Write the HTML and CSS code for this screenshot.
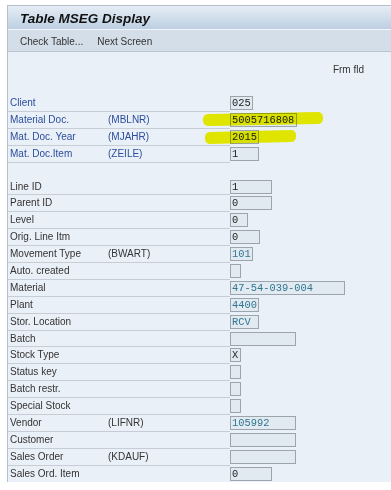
FILE: index.html
```html
<!DOCTYPE html>
<html lang="en-US">
<head>
    <meta charset="UTF-8">
    <meta name="viewport" content="width=device-width" />
    <title>Table MSEG Display</title>
<link rel="stylesheet" href="styles.css">
</head>

<body>
<div id=win>
  <div id=title>Table MSEG Display</div>
  <div id=tools>
    <span>Check Table...</span>
    <span>Next Screen</span>
  </div>
  <div id=main>
    <div id=frm>Frm fld</div>

    <div class="sec key">
      <div class=row><div class=lbl><span class=nm>Client</span></div><span class="fld w23">025</span></div>
      <div class=row><div class=lbl><span class=nm>Material Doc.</span><span class=tc>(MBLNR)</span></div><span class="fld w67">5005716808</span><i class="mark m1"></i></div>
      <div class=row><div class=lbl><span class=nm>Mat. Doc. Year</span><span class=tc>(MJAHR)</span></div><span class="fld w29">2015</span><i class="mark m2"></i></div>
      <div class=row><div class=lbl><span class=nm>Mat. Doc.Item</span><span class=tc>(ZEILE)</span></div><span class="fld w29">1</span></div>
    </div>

    <div class=sec>
      <div class=row><div class=lbl><span class=nm>Line ID</span></div><span class="fld w42">1</span></div>
      <div class=row><div class=lbl><span class=nm>Parent ID</span></div><span class="fld w42">0</span></div>
      <div class=row><div class=lbl><span class=nm>Level</span></div><span class="fld w18">0</span></div>
      <div class=row><div class=lbl><span class=nm>Orig. Line Itm</span></div><span class="fld w30">0</span></div>
      <div class=row><div class=lbl><span class=nm>Movement Type</span><span class=tc>(BWART)</span></div><span class="fld w23 val">101</span></div>
      <div class=row><div class=lbl><span class=nm>Auto. created</span></div><span class="fld w11"></span></div>
      <div class=row><div class=lbl><span class=nm>Material</span></div><span class="fld w115 val">47-54-039-004</span></div>
      <div class=row><div class=lbl><span class=nm>Plant</span></div><span class="fld w29 val">4400</span></div>
      <div class=row><div class=lbl><span class=nm>Stor. Location</span></div><span class="fld w29 val">RCV</span></div>
      <div class=row><div class=lbl><span class=nm>Batch</span></div><span class="fld w66"></span></div>
      <div class=row><div class=lbl><span class=nm>Stock Type</span></div><span class="fld w11">X</span></div>
      <div class=row><div class=lbl><span class=nm>Status key</span></div><span class="fld w11"></span></div>
      <div class=row><div class=lbl><span class=nm>Batch restr.</span></div><span class="fld w11"></span></div>
      <div class=row><div class=lbl><span class=nm>Special Stock</span></div><span class="fld w11"></span></div>
      <div class=row><div class=lbl><span class=nm>Vendor</span><span class=tc>(LIFNR)</span></div><span class="fld w66 val">105992</span></div>
      <div class=row><div class=lbl><span class=nm>Customer</span></div><span class="fld w66"></span></div>
      <div class=row><div class=lbl><span class=nm>Sales Order</span><span class=tc>(KDAUF)</span></div><span class="fld w66"></span></div>
      <div class=row><div class=lbl><span class=nm>Sales Ord. Item</span></div><span class="fld w42">0</span></div>
    </div>
  </div>
</div>
</body>
</html>
```

FILE: styles.css
```css
body {
  margin: 0;
  background: white;
  font: 10px "Liberation Sans", Arial, sans-serif;
  color: #333;
}
#win {
  margin: 5px 0 0 7px;
  border-left: 1px solid #b4c0cc;
  border-top: 1px solid #b4c0cc;
}
#title {
  height: 23px;
  padding-left: 12px;
  font: italic bold 13.5px/25px "Liberation Sans", Arial, sans-serif;
  color: #111;
  background: linear-gradient(#e6edf5, #bccfe2);
  border-bottom: 1px solid #f2f6fa;
}
#tools {
  height: 21px;
  line-height: 23px;
  padding-left: 12px;
  display: flex;
  gap: 14px;
  background: #d3dee9;
  border-bottom: 1px solid #b9c5d1;
}
#main {
  background: #eaf0f7;
  height: 430px;
}
#frm {
  height: 43px;
  line-height: 36px;
  text-align: right;
  padding-right: 27px;
}
.sec { margin-bottom: 16px; }
.row {
  position: relative;
  display: flex;
  height: 16.9px;
  align-items: flex-start;
}
.lbl {
  width: 220px;
  height: 15.9px;
  line-height: 16px;
  padding-left: 2px;
  display: flex;
  border-bottom: 1px solid #c6cdd5;
}
.nm { width: 98px; }
.key .lbl { color: #2b4d9c; }
.fld {
  box-sizing: border-box;
  height: 14px;
  margin-top: 1px;
  border: 1px solid #9ca5ae;
  background: #e2eaf1;
  font: 10.4px/12px "Liberation Mono", "Courier New", monospace;
  padding-left: 1px;
  color: #222;
  white-space: nowrap;
  overflow: hidden;
}
.val { color: #2f7690; }
.w11 { width: 11px; }
.w18 { width: 18px; }
.w23 { width: 23px; }
.w29 { width: 29px; }
.w30 { width: 30px; }
.w42 { width: 42px; }
.w66 { width: 66px; }
.w67 { width: 67px; }
.w115 { width: 115px; }
.mark {
  position: absolute;
  background: #f4f400;
  mix-blend-mode: multiply;
  border-radius: 5px;
}
.m1 { left: 195px; top: 1px; width: 120px; height: 12px; transform: rotate(-1deg); }
.m2 { left: 197px; top: 2px; width: 91px; height: 12px; transform: rotate(-1.5deg); }
```
